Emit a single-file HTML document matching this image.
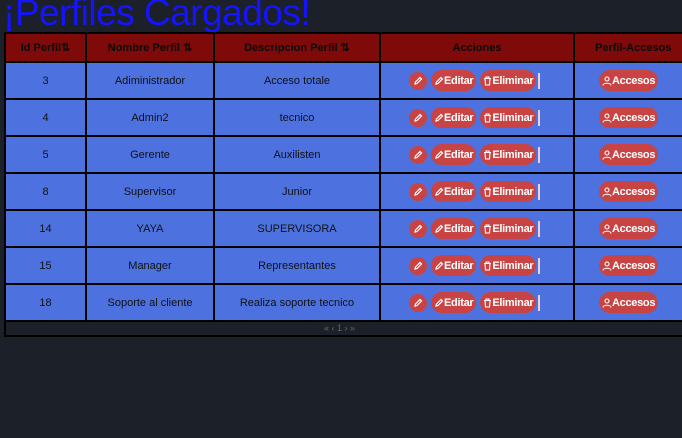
<!DOCTYPE html>
<html><head><style>
html,body{margin:0;padding:0;width:682px;height:438px;overflow:hidden;background:#1c2028;font-family:"Liberation Sans",sans-serif;}
h1{position:absolute;left:3px;top:-8px;margin:0;font-weight:normal;font-size:37px;color:#1414ff;white-space:nowrap;letter-spacing:-0.5px}
table{position:absolute;left:4px;top:32px;border-collapse:collapse;table-layout:fixed;width:760px;}
td,th{border:2px solid #000;text-align:center;font-size:11px;color:#111;padding:0;}
th{background:#7e0a0a;height:27px;font-weight:bold;color:#0a0a0a;}
td{background:#4d72e0;height:35px;}
.w{display:flex;align-items:center;gap:4px}
.b{display:inline-flex;align-items:center;background:#c84444;color:#fff;font-weight:bold;border-radius:11px;height:21px;font-size:11px;padding:0 3px;letter-spacing:-0.3px}
.c{width:18px;height:18px;padding:0;border-radius:9px;justify-content:center}
.bar{display:inline-block;width:2px;height:16px;background:#f0d0d8;margin-left:-2px}
.f td{height:13px;background:#1c2028;font-size:9px;color:#666;line-height:11px}
</style></head><body>
<h1>¡Perfiles Cargados!</h1>
<table>
<colgroup><col style="width:81px"><col style="width:128px"><col style="width:166px"><col style="width:194px"><col style="width:191px"></colgroup>
<tr><th>Id Perfil⇅</th><th>Nombre Perfil ⇅</th><th>Descripcion Perfil ⇅</th><th>Acciones</th><th style="text-align:left;padding-left:20px">Perfil-Accesos</th></tr>
<tr><td>3</td><td>Adiministrador</td><td>Acceso totale</td><td class="a"></td><td class="p"></td></tr>
<tr><td>4</td><td>Admin2</td><td>tecnico</td><td class="a"></td><td class="p"></td></tr>
<tr><td>5</td><td>Gerente</td><td>Auxilisten</td><td class="a"></td><td class="p"></td></tr>
<tr><td>8</td><td>Supervisor</td><td>Junior</td><td class="a"></td><td class="p"></td></tr>
<tr><td>14</td><td>YAYA</td><td>SUPERVISORA</td><td class="a"></td><td class="p"></td></tr>
<tr><td>15</td><td>Manager</td><td>Representantes</td><td class="a"></td><td class="p"></td></tr>
<tr><td>18</td><td>Soporte al cliente</td><td>Realiza soporte tecnico</td><td class="a"></td><td class="p"></td></tr>
<tr class="f"><td colspan="5" style="text-align:left;padding-left:318px">« ‹ 1 › »</td></tr>
</table>
<script>
var pen='<svg width="10" height="10" viewBox="0 0 10 10"><path d="M2 8 L2.5 6 L7 1.5 L8.5 3 L4 7.5 Z" fill="none" stroke="#fff" stroke-width="1.2"/></svg>';
var trash='<svg width="9" height="10" viewBox="0 0 9 10"><path d="M1 2.5H8M3 2.5V1H6V2.5M2 2.5L2.5 9H6.5L7 2.5" fill="none" stroke="#fff" stroke-width="1.1"/></svg>';
var user='<svg width="10" height="10" viewBox="0 0 10 10"><circle cx="5" cy="3" r="2" fill="none" stroke="#fff" stroke-width="1.1"/><path d="M1 9.5C1 6.5 9 6.5 9 9.5" fill="none" stroke="#fff" stroke-width="1.1"/></svg>';
document.querySelectorAll('td.a').forEach(function(t){t.style.textAlign='left';t.style.paddingLeft='28px';t.innerHTML='<div class="w"><span class="b c">'+pen+'</span><span class="b">'+pen+'Editar</span><span class="b">'+trash+'Eliminar</span><span class="bar"></span></div>';});
document.querySelectorAll('td.p').forEach(function(t){t.style.textAlign='left';t.style.paddingLeft='24px';t.innerHTML='<div class="w"><span class="b">'+user+'Accesos</span></div>';});
</script>
</body></html>
